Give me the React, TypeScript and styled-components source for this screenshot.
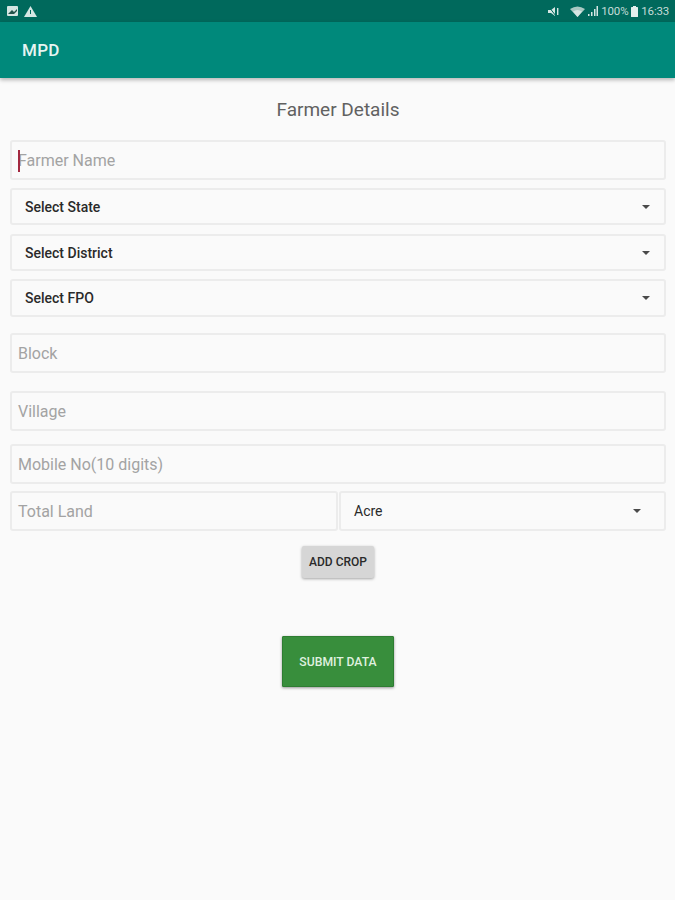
import React from "react";
import styled, { createGlobalStyle } from "styled-components";

const Global = createGlobalStyle`
  html, body { margin: 0; padding: 0; background: #fafafa; }
  body { font-family: Roboto, "Liberation Sans", sans-serif; }
`;

const Page = styled.div`
  width: 675px;
  height: 900px;
  background: #fafafa;
  display: flex;
  flex-direction: column;
  overflow: hidden;
`;

const StatusBar = styled.div`
  height: 22px;
  flex: none;
  background: #00695c;
  display: flex;
  align-items: center;
  justify-content: space-between;
  padding: 0 6px 0 7px;
  color: #cfe3df;
`;

const StatusGroup = styled.div<{ $gap: number }>`
  display: flex;
  align-items: center;
  gap: ${(p) => p.$gap}px;
`;

const StatusSpacer = styled.span`
  width: 5px;
`;

const StatusText = styled.span`
  font-size: 11.5px;
  line-height: 22px;
  letter-spacing: -0.2px;
  color: #c4dcd8;
`;

const AppBar = styled.header`
  height: 56px;
  flex: none;
  background: #00897b;
  box-shadow: 0 2px 4px rgba(0, 0, 0, 0.28);
  display: flex;
  align-items: center;
  padding-left: 22px;
  color: #e6f5f2;
  font-size: 17px;
  font-weight: 500;
  letter-spacing: 0.3px;
`;

const Form = styled.main`
  display: flex;
  flex-direction: column;
  padding: 0 9px 0 10px;
`;

const Title = styled.h1`
  margin: 21px 0 0;
  height: 22px;
  font-size: 19px;
  line-height: 22px;
  font-weight: 400;
  text-align: center;
  color: #616161;
`;

const Field = styled.div<{ $top?: number; $height?: number }>`
  margin-top: ${(p) => p.$top ?? 0}px;
  height: ${(p) => p.$height ?? 40}px;
  flex: none;
  box-sizing: border-box;
  border: 2px solid #ececec;
  border-radius: 3px;
  background: #fafafa;
  display: flex;
  align-items: center;
  padding: 1px 0 0 6px;
  position: relative;
  font-size: 16px;
  color: #a3a3a3;
`;

const Caret = styled.span`
  position: absolute;
  left: 6px;
  top: 8px;
  width: 2px;
  height: 22px;
  background: #a3283f;
`;

const Select = styled.div<{ $top?: number; $height: number }>`
  margin-top: ${(p) => p.$top ?? 0}px;
  height: ${(p) => p.$height}px;
  flex: none;
  box-sizing: border-box;
  border: 2px solid #ececec;
  border-radius: 3px;
  display: flex;
  align-items: center;
  justify-content: space-between;
  padding: 0 14px 0 13px;
  font-size: 14px;
  font-weight: 500;
  color: #2a2a2a;
`;

const Arrow = styled.span`
  width: 0;
  height: 0;
  border-left: 4px solid transparent;
  border-right: 4px solid transparent;
  border-top: 4px solid #4a4a4a;
`;

const LandRow = styled.div`
  display: grid;
  grid-template-columns: 328px 327px;
  gap: 1px;
  margin-top: 7px;
`;

const UnitSelect = styled(Select)`
  padding: 0 23px 0 13px;
  font-weight: 400;
`;

const CropButton = styled.button`
  align-self: center;
  margin-top: 15px;
  width: 72px;
  height: 32px;
  padding: 0;
  border: none;
  border-radius: 2px;
  background: #d6d6d6;
  box-shadow: 0 1px 3px rgba(0, 0, 0, 0.35);
  font-family: inherit;
  font-size: 12px;
  font-weight: 500;
  color: #2a2a2a;
`;

const SubmitButton = styled.button`
  align-self: center;
  margin-top: 58px;
  width: 112px;
  height: 51px;
  padding: 0;
  border: 1px solid #2e7d32;
  border-radius: 1px;
  background: #388e3c;
  box-shadow: 0 1px 3px rgba(0, 0, 0, 0.4);
  font-family: inherit;
  font-size: 12.2px;
  font-weight: 500;
  color: #dff0df;
`;

const ImageIcon = () => (
  <svg width="11" height="10" viewBox="0 0 11 10">
    <rect width="11" height="10" rx="1" fill="#d5e6e3" />
    <path d="M1 8 L5 4 L7 6 L10 3 L10 5 L7 8 Z" fill="#22544c" />
  </svg>
);
const WarnIcon = () => (
  <svg width="13" height="11" viewBox="0 0 13 11">
    <path d="M6.5 0 L13 11 L0 11 Z" fill="#d5e6e3" />
    <rect x="6" y="4" width="1" height="4" fill="#00695c" />
  </svg>
);
const MuteIcon = () => (
  <svg width="11" height="11" viewBox="0 0 11 11">
    <path d="M0 4 H3 L7 1 V10 L3 7 H0 Z" fill="#d5e6e3" />
    <path d="M1 1 L8 10" stroke="#00695c" strokeWidth="1" />
    <rect x="9" y="2" width="1.4" height="7" fill="#d5e6e3" />
  </svg>
);
const WifiIcon = () => (
  <svg width="15" height="11" viewBox="0 0 15 11">
    <path d="M0 3 Q7.5 -2 15 3 L7.5 11 Z" fill="#a9c9c3" />
    <path d="M3 5.5 Q7.5 2.5 12 5.5 L7.5 11 Z" fill="#d5e6e3" />
  </svg>
);
const SignalIcon = () => (
  <svg width="10" height="10" viewBox="0 0 10 10">
    <rect x="0" y="8" width="1.5" height="2" fill="#d5e6e3" />
    <rect x="3" y="6" width="1.5" height="4" fill="#d5e6e3" />
    <rect x="6" y="3" width="1.5" height="7" fill="#d5e6e3" />
    <rect x="8.5" y="0" width="1.5" height="10" fill="#d5e6e3" />
  </svg>
);
const BatteryIcon = () => (
  <svg width="7" height="11" viewBox="0 0 7 11">
    <rect x="2" y="0" width="3" height="1" fill="#e4efed" />
    <rect x="0" y="1" width="7" height="10" rx="0.5" fill="#e4efed" />
  </svg>
);

export default function App() {
  return (
    <Page>
      <Global />
      <StatusBar>
        <StatusGroup $gap={6}>
          <ImageIcon />
          <WarnIcon />
        </StatusGroup>
        <StatusGroup $gap={3}>
          <MuteIcon />
          <StatusSpacer />
          <WifiIcon />
          <SignalIcon />
          <StatusText>100%</StatusText>
          <BatteryIcon />
          <StatusText>16:33</StatusText>
        </StatusGroup>
      </StatusBar>
      <AppBar>MPD</AppBar>
      <Form>
        <Title>Farmer Details</Title>
        <Field $top={19}>
          <Caret />
          Farmer Name
        </Field>
        <Select $top={8} $height={37}>
          Select State
          <Arrow />
        </Select>
        <Select $top={9} $height={37}>
          Select District
          <Arrow />
        </Select>
        <Select $top={8} $height={38}>
          Select FPO
          <Arrow />
        </Select>
        <Field $top={16}>Block</Field>
        <Field $top={18}>Village</Field>
        <Field $top={13}>Mobile No(10 digits)</Field>
        <LandRow>
          <Field>Total Land</Field>
          <UnitSelect $height={40}>
            Acre
            <Arrow />
          </UnitSelect>
        </LandRow>
        <CropButton>ADD CROP</CropButton>
        <SubmitButton>SUBMIT DATA</SubmitButton>
      </Form>
    </Page>
  );
}
